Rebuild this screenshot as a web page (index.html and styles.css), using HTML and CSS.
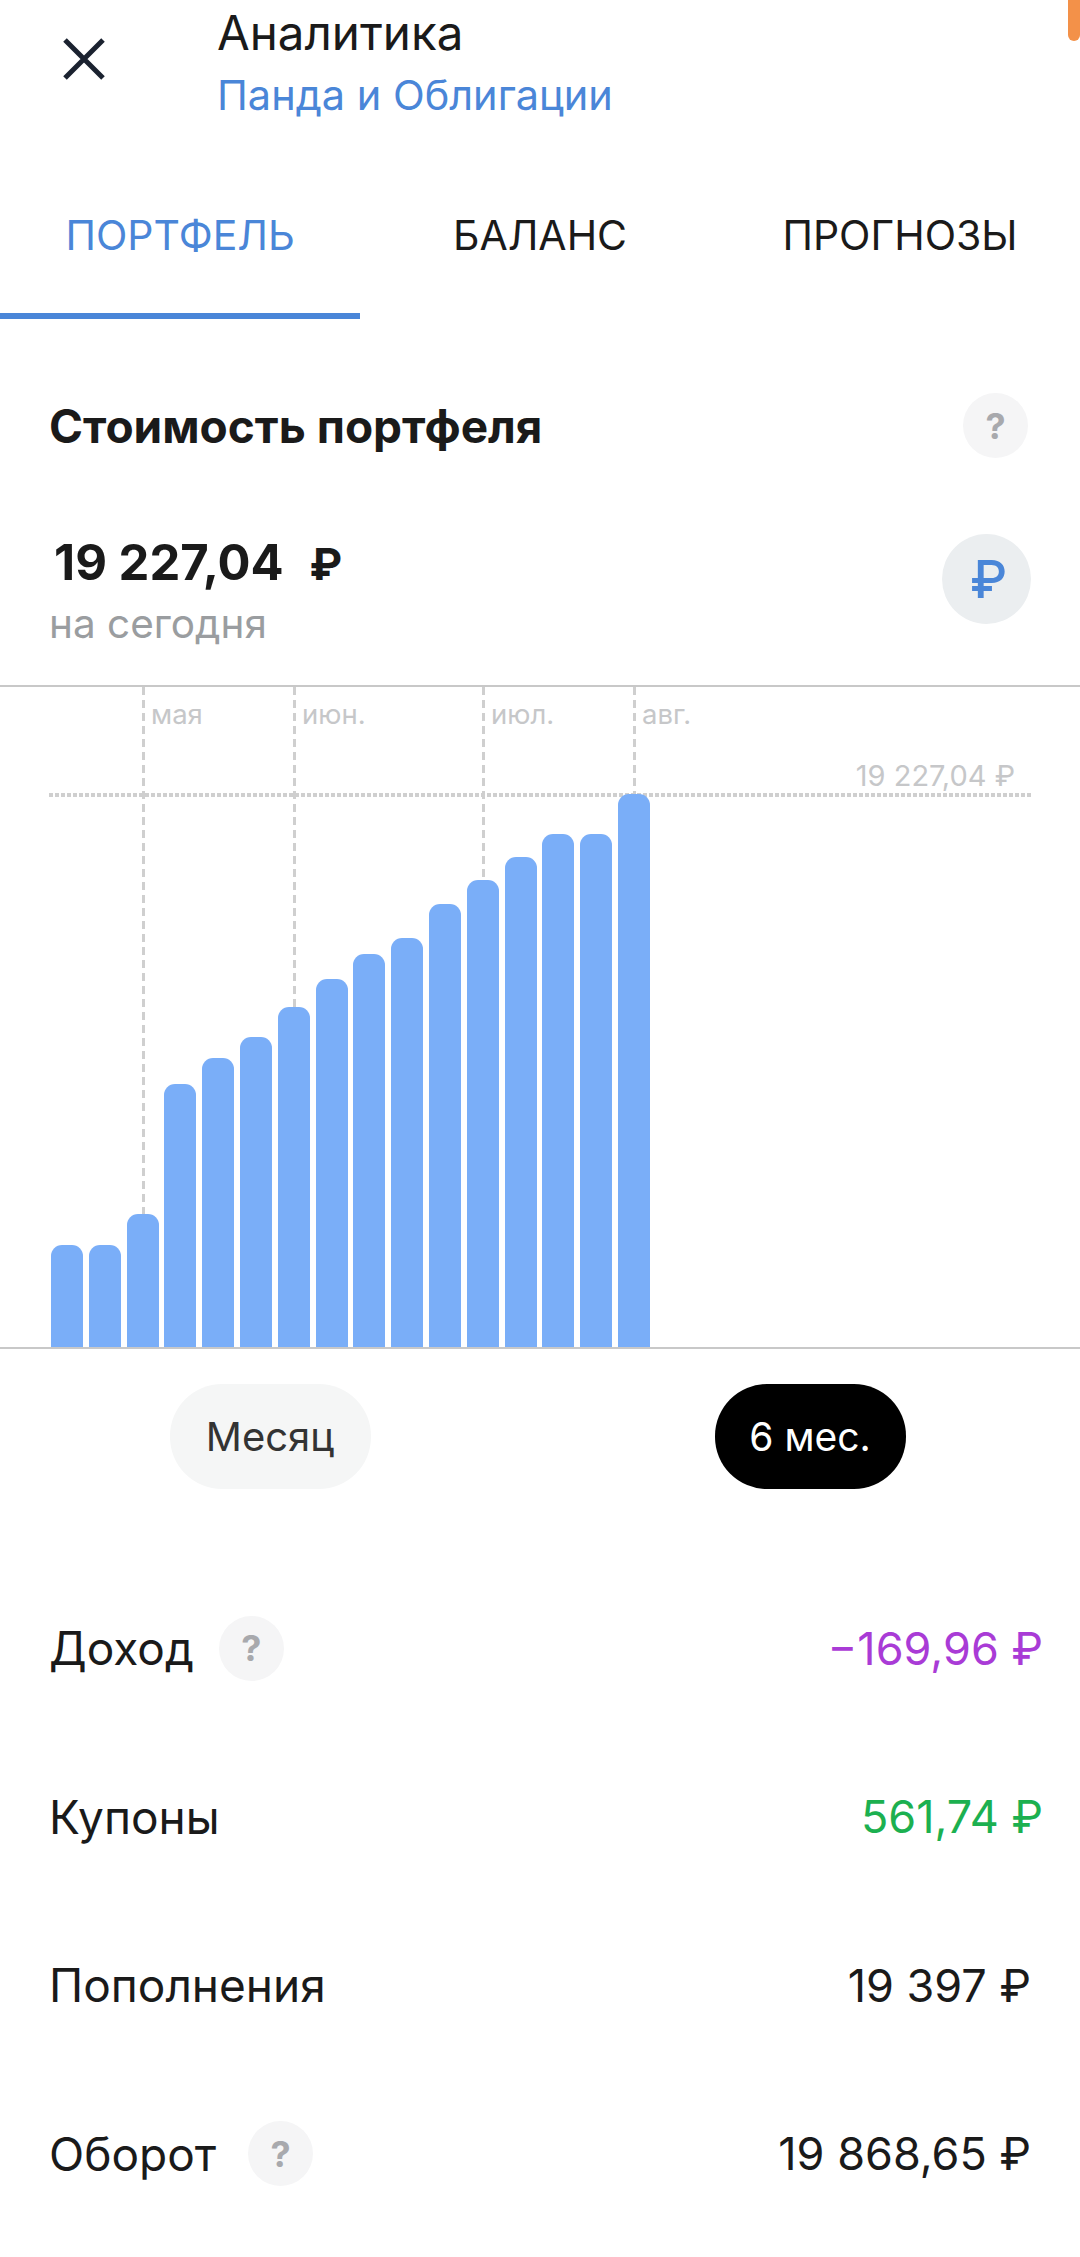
FILE: index.html
```html
<!DOCTYPE html>
<html lang="ru">
<head>
    <meta charset="UTF-8">
    <meta name="viewport" content="width=device-width, initial-scale=1.0">
    <title>Аналитика</title>
    <link rel="stylesheet" href="styles.css">
</head>
<body>
    <div class="app">
        <span class="corner-mark"></span>

        <header class="topbar">
            <svg class="close-icon" viewBox="0 0 42 42" fill="none">
                <path d="M2 2 L40 40 M40 2 L2 40" stroke="#1b2230" stroke-width="5"/>
            </svg>
            <div class="titles">
                <div class="title">Аналитика</div>
                <div class="subtitle">Панда и Облигации</div>
            </div>
        </header>

        <nav class="tabs">
            <div class="tab active">ПОРТФЕЛЬ</div>
            <div class="tab">БАЛАНС</div>
            <div class="tab">ПРОГНОЗЫ</div>
        </nav>

        <section class="value-head">
            <h2>Стоимость портфеля</h2>
            <span class="help">?</span>
        </section>

        <section class="summary">
            <div>
                <div class="amount">19 227,04 <span class="amount-sign">₽</span></div>
                <div class="amount-note">на сегодня</div>
            </div>
            <span class="currency">₽</span>
        </section>

        <section class="chart">
            <!-- gridlines sit behind the bars -->
            <div class="month" style="left: 142px"><span>мая</span></div>
            <div class="month" style="left: 293px"><span>июн.</span></div>
            <div class="month" style="left: 482px"><span>июл.</span></div>
            <div class="month" style="left: 633px"><span>авг.</span></div>
            <div class="max-line"></div>
            <div class="max-label">19 227,04 ₽</div>

            <div class="bars">
                <div class="bar" style="height: 102px"></div>
                <div class="bar" style="height: 102px"></div>
                <div class="bar" style="height: 133px"></div>
                <div class="bar" style="height: 263px"></div>
                <div class="bar" style="height: 289px"></div>
                <div class="bar" style="height: 310px"></div>
                <div class="bar" style="height: 340px"></div>
                <div class="bar" style="height: 368px"></div>
                <div class="bar" style="height: 393px"></div>
                <div class="bar" style="height: 409px"></div>
                <div class="bar" style="height: 443px"></div>
                <div class="bar" style="height: 467px"></div>
                <div class="bar" style="height: 490px"></div>
                <div class="bar" style="height: 513px"></div>
                <div class="bar" style="height: 513px"></div>
                <div class="bar" style="height: 553px"></div>
            </div>
        </section>

        <div class="periods">
            <div class="pill">Месяц</div>
            <div class="pill selected">6 мес.</div>
        </div>

        <section class="stats">
            <div class="stat">
                <div class="stat-label">Доход <span class="help">?</span></div>
                <div class="stat-value edge purple">−169,96 ₽</div>
            </div>
            <div class="stat">
                <div class="stat-label">Купоны</div>
                <div class="stat-value edge green">561,74 ₽</div>
            </div>
            <div class="stat">
                <div class="stat-label">Пополнения</div>
                <div class="stat-value">19 397 ₽</div>
            </div>
            <div class="stat">
                <div class="stat-label">Оборот <span class="help help-far">?</span></div>
                <div class="stat-value">19 868,65 ₽</div>
            </div>
        </section>
    </div>
</body>
</html>
```

FILE: styles.css
```css
* {
    margin: 0;
    padding: 0;
    box-sizing: border-box;
}

body {
    font-family: Inter, Roboto, sans-serif;
    background: #fff;
    color: #1a1a1a;
}

.app {
    position: relative;
    width: 1080px;
    height: 2257px;
    overflow: hidden;
    background: #fff;
}

.corner-mark {
    position: absolute;
    top: -12px;
    right: 0;
    width: 12px;
    height: 53px;
    background: #f39149;
    border-radius: 0 0 6px 6px;
}

.topbar {
    display: flex;
    height: 160px;
    padding: 2px 0 0 63px;
}

.close-icon {
    width: 42px;
    height: 42px;
    margin-top: 36px;
}

.titles {
    margin-left: 112px;
}

.title,
.subtitle {
    line-height: 62px;
}

.title {
    font-size: 47.5px;
}

.subtitle {
    font-size: 41.5px;
    color: #4a86d8;
}

.tabs {
    display: grid;
    grid-template-columns: repeat(3, 360px);
}

.tab {
    height: 159px;
    padding-bottom: 3px;
    display: flex;
    align-items: center;
    justify-content: center;
    font-size: 41px;
    border-bottom: 6px solid transparent;
}

.tab.active {
    color: #4a86d8;
    border-bottom-color: #4a86d8;
}

.value-head {
    display: flex;
    align-items: center;
    justify-content: space-between;
    margin-top: 74px;
    padding: 0 52px 0 49px;
}

.value-head h2 {
    font-size: 46px;
    font-weight: 700;
}

.help {
    display: inline-flex;
    align-items: center;
    justify-content: center;
    width: 65px;
    height: 65px;
    border-radius: 50%;
    background: #f5f5f6;
    color: #a8a9ad;
    font-size: 36px;
    font-weight: 700;
}

.help-far {
    margin-left: 7px;
}

.summary {
    display: flex;
    align-items: flex-start;
    justify-content: space-between;
    height: 151px;
    margin-top: 76px;
    padding: 0 49px;
}

.amount {
    margin: 3px 0 0 5px;
    font-size: 49px;
    font-weight: 700;
    line-height: 52px;
}

.amount-sign {
    margin-left: 14px;
    font-size: 44px;
}

.amount-note {
    margin-top: 5px;
    font-size: 40.5px;
    line-height: 58px;
    color: #9a9da0;
}

.currency {
    display: flex;
    align-items: center;
    justify-content: center;
    width: 89px;
    height: 90px;
    padding-left: 4px;
    border-radius: 50%;
    background: #ebeef0;
    color: #4a86d8;
    font-size: 52px;
    font-weight: 500;
}

.chart {
    position: relative;
    height: 664px;
    border-top: 2px solid #c8c8c8;
    border-bottom: 2px solid #c8c8c8;
}

.month {
    position: absolute;
    top: 0;
    bottom: 0;
    width: 3px;
    background: repeating-linear-gradient(180deg, #cfcfcf 0 8px, transparent 8px 13px);
}

.month span {
    position: absolute;
    top: 12px;
    left: 9px;
    font-size: 27.5px;
    line-height: 30px;
    color: #c6c7c9;
}

.max-line {
    position: absolute;
    top: 106px;
    left: 49px;
    right: 49px;
    height: 4px;
    background: repeating-linear-gradient(90deg, #cfcfcf 0 4px, transparent 4px 6px);
}

.max-label {
    position: absolute;
    top: 71px;
    right: 65px;
    font-size: 29px;
    line-height: 36px;
    color: #c6c7c9;
}

.bars {
    position: absolute;
    left: 51px;
    bottom: 0;
    display: flex;
    align-items: flex-end;
    gap: 5.8px;
}

.bar {
    width: 32px;
    background: #7aaef8;
    border-radius: 11px 11px 0 0;
}

.periods {
    display: grid;
    grid-template-columns: 1fr 1fr;
    justify-items: center;
    margin-top: 35px;
}

.pill {
    display: flex;
    align-items: center;
    justify-content: center;
    width: 201px;
    height: 105px;
    border-radius: 52px;
    background: #f5f6f6;
    color: #333;
    font-size: 40px;
}

.pill.selected {
    width: 191px;
    background: #000;
    color: #fff;
    font-size: 39px;
}

.stats {
    margin-top: 75px;
}

.stat {
    display: flex;
    align-items: center;
    justify-content: space-between;
    height: 168.5px;
    padding: 0 49px;
}

.stat-label {
    display: flex;
    align-items: center;
    gap: 25px;
    font-size: 46px;
}

.stat-value {
    font-size: 45px;
}

.stat-value.edge {
    margin-right: -12px;
}

.purple {
    color: #a93bd6;
}

.green {
    color: #1cb050;
}
```
